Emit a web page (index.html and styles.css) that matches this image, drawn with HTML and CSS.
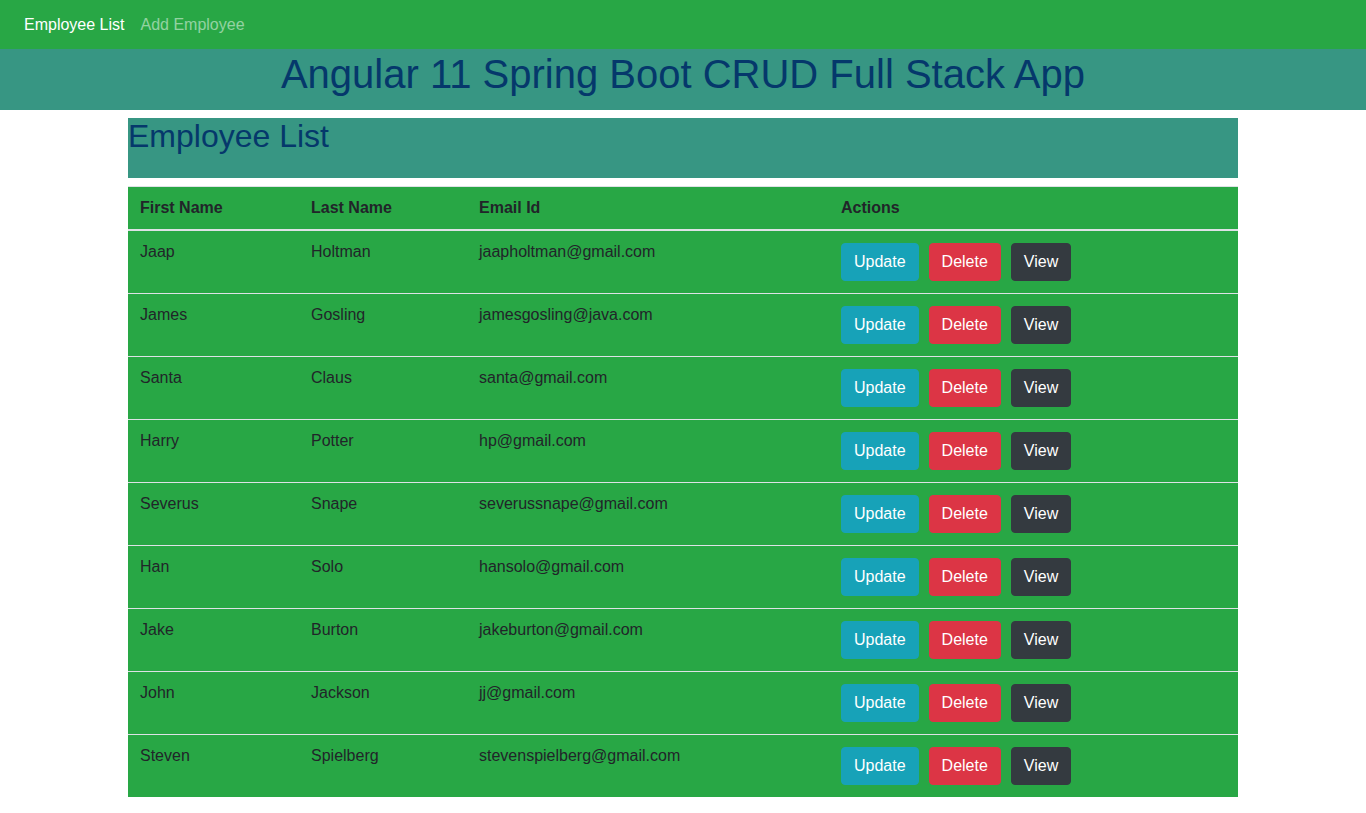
FILE: index.html
```html
<!DOCTYPE html>
<html lang="en">
<head>
<meta charset="utf-8">
<title>Angular 11 Spring Boot CRUD Full Stack App</title>
<link rel="stylesheet" href="styles.css">
</head>
<body>
<nav class="navbar">
  <a class="nav-link active" href="#">Employee List</a>
  <a class="nav-link" href="#">Add Employee</a>
</nav>
<h1 class="app-title">Angular 11 Spring Boot CRUD Full Stack App</h1>
<div class="container">
  <h2 class="list-title">Employee List</h2>
  <table class="table">
    <thead>
      <tr>
        <th class="c-first">First Name</th>
        <th class="c-last">Last Name</th>
        <th class="c-email">Email Id</th>
        <th class="c-actions">Actions</th>
      </tr>
    </thead>
    <tbody>
      <tr><td>Jaap</td><td>Holtman</td><td>jaapholtman@gmail.com</td><td><button class="btn btn-info">Update</button><button class="btn btn-danger">Delete</button><button class="btn btn-dark">View</button></td></tr>
      <tr><td>James</td><td>Gosling</td><td>jamesgosling@java.com</td><td><button class="btn btn-info">Update</button><button class="btn btn-danger">Delete</button><button class="btn btn-dark">View</button></td></tr>
      <tr><td>Santa</td><td>Claus</td><td>santa@gmail.com</td><td><button class="btn btn-info">Update</button><button class="btn btn-danger">Delete</button><button class="btn btn-dark">View</button></td></tr>
      <tr><td>Harry</td><td>Potter</td><td>hp@gmail.com</td><td><button class="btn btn-info">Update</button><button class="btn btn-danger">Delete</button><button class="btn btn-dark">View</button></td></tr>
      <tr><td>Severus</td><td>Snape</td><td>severussnape@gmail.com</td><td><button class="btn btn-info">Update</button><button class="btn btn-danger">Delete</button><button class="btn btn-dark">View</button></td></tr>
      <tr><td>Han</td><td>Solo</td><td>hansolo@gmail.com</td><td><button class="btn btn-info">Update</button><button class="btn btn-danger">Delete</button><button class="btn btn-dark">View</button></td></tr>
      <tr><td>Jake</td><td>Burton</td><td>jakeburton@gmail.com</td><td><button class="btn btn-info">Update</button><button class="btn btn-danger">Delete</button><button class="btn btn-dark">View</button></td></tr>
      <tr><td>John</td><td>Jackson</td><td>jj@gmail.com</td><td><button class="btn btn-info">Update</button><button class="btn btn-danger">Delete</button><button class="btn btn-dark">View</button></td></tr>
      <tr><td>Steven</td><td>Spielberg</td><td>stevenspielberg@gmail.com</td><td><button class="btn btn-info">Update</button><button class="btn btn-danger">Delete</button><button class="btn btn-dark">View</button></td></tr>
    </tbody>
  </table>
</div>
</body>
</html>
```
FILE: styles.css
```css
* { box-sizing: border-box; }
body {
  margin: 0;
  font-family: "Liberation Sans", Arial, sans-serif;
  font-size: 16px;
  color: #212529;
  background: #fff;
}
.navbar {
  display: flex;
  align-items: center;
  height: 49px;
  padding: 0 16px;
  background: #28a745;
}
.nav-link {
  padding: 0 8px;
  color: rgba(255,255,255,.5);
  text-decoration: none;
  font-size: 16px;
}
.nav-link.active { color: #fff; }
.app-title {
  margin: 0;
  height: 61px;
  line-height: 50px;
  text-align: center;
  font-size: 40px;
  font-weight: 400;
  color: #05386b;
  background: #379683;
}
.container {
  width: 1110px;
  margin: 8px auto 0;
}
.list-title {
  margin: 0 0 8px;
  height: 60px;
  font-size: 32px;
  font-weight: 400;
  line-height: 37px;
  color: #05386b;
  background: #379683;
}
.table {
  width: 100%;
  border-collapse: collapse;
  background: #28a745;
  color: #212529;
}
.table th, .table td {
  text-align: left;
  vertical-align: top;
  padding: 12px;
  border-top: 1px solid #dee2e6;
  line-height: 18px;
}
.table th { font-weight: 700; border-bottom: 2px solid #dee2e6; }
.c-first { width: 171px; }
.c-last { width: 168px; }
.c-email { width: 362px; }
.btn {
  display: inline-block;
  font-family: inherit;
  font-size: 16px;
  line-height: 24px;
  padding: 6px 12px;
  border: 1px solid transparent;
  border-radius: 4px;
  color: #fff;
  margin-right: 10px;
  cursor: pointer;
  vertical-align: top;
}
.btn-info { background: #17a2b8; border-color: #17a2b8; }
.btn-danger { background: #dc3545; border-color: #dc3545; }
.btn-dark { background: #343a40; border-color: #343a40; }
```
